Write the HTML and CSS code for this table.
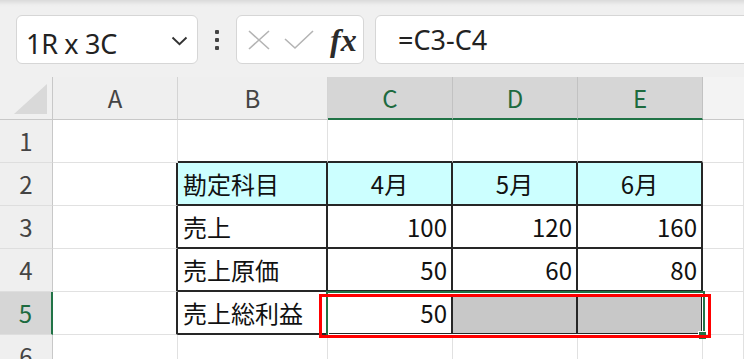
FILE: index.html
```html
<!DOCTYPE html>
<html lang="ja">
<head>
<meta charset="utf-8">
<title>売上総利益</title>
<link rel="stylesheet" href="styles.css">
</head>
<body>
<div class="app">
  <div class="toolbar">
    <div class="namebox">
      <span class="namebox-text">1R x 3C</span>
      <svg class="chevron" width="17" height="10" viewBox="0 0 17 10"><path d="M1.5 1.5 L8.5 8.2 L15.5 1.5" fill="none" stroke="#333" stroke-width="1.9"/></svg>
    </div>
    <div class="kebab"><i></i><i></i><i></i></div>
    <div class="fxbtns">
      <svg class="ico" width="24" height="22" viewBox="0 0 24 22"><path d="M2 2 L22 20 M22 2 L2 20" stroke="#b4b4b4" stroke-width="1.6" fill="none"/></svg>
      <svg class="ico" width="30" height="22" viewBox="0 0 30 22"><path d="M1 10 L11 19 L29 2" stroke="#b4b4b4" stroke-width="1.6" fill="none"/></svg>
      <span class="fx">fx</span>
    </div>
    <div class="formula">=C3-C4</div>
  </div>

  <div class="sheet">
    <!-- column headers -->
    <div class="corner"><svg width="36" height="32" viewBox="0 0 36 32"><path d="M34 1 L34 31 L1 31 Z" fill="#d9d9d9"/></svg></div>
    <div class="ch">A</div>
    <div class="ch">B</div>
    <div class="ch on">C</div>
    <div class="ch on">D</div>
    <div class="ch on">E</div>
    <div class="ch tail"></div>

    <!-- row 1 -->
    <div class="rh">1</div>
    <div class="c"></div>
    <div class="c above"></div>
    <div class="c above"></div>
    <div class="c above"></div>
    <div class="c above"></div>
    <div class="c"></div>

    <!-- row 2 -->
    <div class="rh">2</div>
    <div class="c before"></div>
    <div class="c t head left">勘定科目</div>
    <div class="c t head mid">4月</div>
    <div class="c t head mid">5月</div>
    <div class="c t head mid">6月</div>
    <div class="c"></div>

    <!-- row 3 -->
    <div class="rh">3</div>
    <div class="c before"></div>
    <div class="c t left">売上</div>
    <div class="c t num">100</div>
    <div class="c t num">120</div>
    <div class="c t num">160</div>
    <div class="c"></div>

    <!-- row 4 -->
    <div class="rh">4</div>
    <div class="c before"></div>
    <div class="c t left">売上原価</div>
    <div class="c t num">50</div>
    <div class="c t num">60</div>
    <div class="c t num">80</div>
    <div class="c"></div>

    <!-- row 5 -->
    <div class="rh on">5</div>
    <div class="c before"></div>
    <div class="c t left">売上総利益</div>
    <div class="c t num">50</div>
    <div class="c t num picked"></div>
    <div class="c t num picked"></div>
    <div class="c"></div>

    <!-- row 6 -->
    <div class="rh">6</div>
    <div class="c"></div>
    <div class="c"></div>
    <div class="c"></div>
    <div class="c"></div>
    <div class="c"></div>
    <div class="c"></div>

    <div class="selection"></div>
    <div class="fill-handle"></div>
    <div class="callout"></div>
  </div>
</div>
</body>
</html>
```

FILE: styles.css
```css
html, body {
  margin: 0;
  padding: 0;
  background: #fff;
  overflow: hidden;
}

.app {
  width: 744px;
  height: 359px;
  overflow: hidden;
}

/* ---- formula bar ---- */
.toolbar {
  height: 77px;
  box-sizing: border-box;
  padding: 15px 0 0 16px;
  display: flex;
  align-items: flex-start;
  background: linear-gradient(#dadada 0, #eeeeee 5px, #f0f0f0 8px);
  font-family: "Noto Sans", "Liberation Sans", sans-serif;
  color: #222;
}

.namebox,
.fxbtns,
.formula {
  height: 49px;
  box-sizing: border-box;
  background: #fff;
  border: 1px solid #d6d6d6;
  border-radius: 6px;
  display: flex;
  align-items: center;
}

.namebox {
  width: 182px;
  padding: 0 9px 0 9px;
  justify-content: space-between;
}

.namebox-text {
  font-size: 27px;
  line-height: 1;
  margin-top: 7px;
  letter-spacing: -0.3px;
}

.chevron {
  margin-top: 2px;
}

.kebab {
  width: 38px;
  height: 49px;
  display: flex;
  flex-direction: column;
  align-items: center;
  justify-content: center;
  gap: 4px;
}

.kebab i {
  display: block;
  width: 4px;
  height: 4px;
  border-radius: 1px;
  background: #444;
}

.fxbtns {
  width: 128px;
  padding: 0 4px 0 10px;
  gap: 13px;
}

.ico {
  display: block;
  flex: none;
}

.fx {
  font-family: "Liberation Serif", "DejaVu Serif", serif;
  font-style: italic;
  font-weight: bold;
  font-size: 32px;
  line-height: 1;
  color: #2b2b2b;
  margin-left: 3px;
}

.formula {
  flex: 1;
  margin-left: 11px;
  margin-right: -12px;
  padding-left: 22px;
  font-size: 27px;
  line-height: 1;
}

/* ---- worksheet ---- */
.sheet {
  position: relative;
  display: grid;
  grid-template-columns: 53px 125px 150px 125px 125px 125px 41px;
  grid-template-rows: repeat(7, 43px);
  font-family: "Noto Sans CJK JP", "Noto Sans", sans-serif;
  font-size: 24px;
  color: #111;
}

.sheet > div {
  box-sizing: border-box;
}

.corner {
  background: #f0f0f0;
  border-right: 1px solid #c8c8c8;
  border-bottom: 1px solid #c8c8c8;
  display: flex;
  align-items: flex-end;
  justify-content: flex-end;
  padding: 0 3px 4px 0;
}

.corner svg {
  display: block;
}

.ch {
  background: #efefef;
  border-right: 1px solid #d4d4d4;
  border-bottom: 1px solid #c8c8c8;
  display: flex;
  align-items: center;
  justify-content: center;
  color: #444;
  line-height: 1;
}

.ch.on {
  background: #d6d6d6;
  color: #1d6b3f;
  border-bottom: 2px solid #217346;
  border-right-color: #c2c2c2;
}

.ch.tail {
  border-right: none;
  background: #f3f3f3;
}

.rh {
  background: #efefef;
  border-right: 1px solid #c8c8c8;
  border-bottom: 1px solid #dedede;
  display: flex;
  align-items: center;
  justify-content: center;
  color: #444;
  line-height: 1;
}

.rh.on {
  background: #d6d6d6;
  color: #1d6b3f;
  border-right: 2px solid #217346;
}

.c {
  border-right: 1px solid #e1e1e1;
  border-bottom: 1px solid #e1e1e1;
  display: flex;
  align-items: center;
  line-height: 1;
  white-space: nowrap;
  padding: 0 5px;
}

/* outline of the table B2:E5 */
.c.above {
  border-bottom: 2px solid #262626;
}

.c.before {
  border-right: 2px solid #262626;
}

.c.t {
  border-right: 2px solid #262626;
  border-bottom: 2px solid #262626;
}

.c.head {
  background: #ccffff;
}

.c.left {
  justify-content: flex-start;
  padding-left: 5px;
}

.c.mid {
  justify-content: center;
}

.c.num {
  justify-content: flex-end;
  padding-right: 4px;
}

.c.picked {
  background: #c8c8c8;
}

/* selected range C5:E5 */
.selection {
  position: absolute;
  left: 326px;
  top: 214px;
  width: 379px;
  height: 46px;
  border: 2px solid #217346;
  box-shadow: inset 0 0 0 1px #fff;
  box-sizing: border-box;
  pointer-events: none;
}

.fill-handle {
  position: absolute;
  left: 698px;
  top: 254px;
  width: 8px;
  height: 8px;
  background: #217346;
  border-left: 1px solid #fff;
  border-top: 1px solid #fff;
  box-sizing: border-box;
}

/* red highlight frame */
.callout {
  position: absolute;
  left: 319px;
  top: 217px;
  width: 392px;
  height: 44px;
  border: 3px solid #ff0000;
  box-sizing: border-box;
  pointer-events: none;
}
```
